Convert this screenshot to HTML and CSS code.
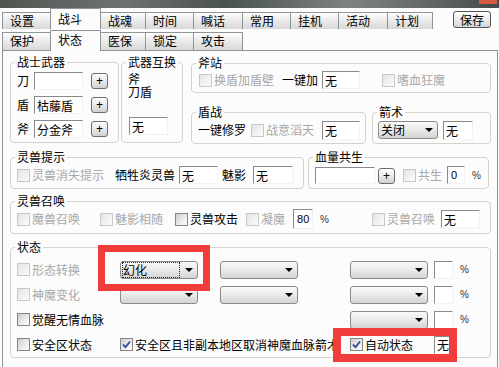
FILE: index.html
```html
<!DOCTYPE html>
<html>
  <head>
    <meta charset="UTF-8">
    <title>战斗 - 状态</title>
    <link rel="stylesheet" href="styles.css">
  </head>
  <body>
    <div class="titlebar"><span class="close"></span></div>

    <div class="tabs tabs-main">
      <span class="tab">设置</span>
      <span class="tab active">战斗</span>
      <span class="tab">战魂</span>
      <span class="tab">时间</span>
      <span class="tab">喊话</span>
      <span class="tab">常用</span>
      <span class="tab">挂机</span>
      <span class="tab">活动</span>
      <span class="tab">计划</span>
      <button class="save">保存</button>
    </div>
    <div class="tabs tabs-sub">
      <span class="tab">保护</span>
      <span class="tab active">状态</span>
      <span class="tab">医保</span>
      <span class="tab">锁定</span>
      <span class="tab">攻击</span>
    </div>

    <div class="panel">
      <div class="row">
        <fieldset class="group g-weapon">
          <legend>战士武器</legend>
          <div class="weapon"><span class="weapon-name">刀</span><input class="edit w49" type="text" value=""><button class="plus">+</button></div>
          <div class="weapon"><span class="weapon-name">盾</span><input class="edit w49" type="text" value="枯藤盾"><button class="plus">+</button></div>
          <div class="weapon"><span class="weapon-name">斧</span><input class="edit w49" type="text" value="分金斧"><button class="plus">+</button></div>
        </fieldset>

        <fieldset class="group g-swap">
          <legend>武器互换</legend>
          <div class="swap-names">
            <span>斧</span>
            <span>刀盾</span>
          </div>
          <input class="edit w39 swap-edit" type="text" value="无">
        </fieldset>

        <div class="col-right">
          <fieldset class="group g-axe">
            <legend>斧站</legend>
            <div class="line h20">
              <label class="check off ml1"><span class="box"></span>换盾加盾壁</label>
              <span class="ml8">一键加</span>
              <input class="edit w38 ml4" type="text" value="无">
              <label class="check off ml22"><span class="box"></span>嗜血狂魔</label>
            </div>
          </fieldset>

          <div class="row row-dun">
            <fieldset class="group g-dun">
              <legend>盾战</legend>
              <div class="line h22">
                <span>一键修罗</span>
                <label class="check off ml5"><span class="box"></span>战意滔天</label>
                <input class="edit w38 h19 ml8" type="text" value="无">
              </div>
            </fieldset>
            <fieldset class="group g-bow">
              <legend>箭术</legend>
              <div class="line h22">
                <div class="combo w60 mln1"><span class="value">关闭</span><span class="arrow"></span></div>
                <input class="edit w30 h19 ml5" type="text" value="无">
              </div>
            </fieldset>
          </div>
        </div>
      </div>

      <div class="row row-pet">
        <fieldset class="group g-tip">
          <legend>灵兽提示</legend>
          <div class="line h22">
            <label class="check off"><span class="box"></span>灵兽消失提示</label>
            <span class="ml11">牺牲炎灵兽</span>
            <input class="edit w39 ml4" type="text" value="无">
            <span class="ml4">魅影</span>
            <input class="edit w40 ml7" type="text" value="无">
          </div>
        </fieldset>
        <fieldset class="group g-blood">
          <legend>血量共生</legend>
          <div class="line h22">
            <input class="edit w60 h17" type="text" value="">
            <button class="plus ml3 low">+</button>
            <label class="check off ml8"><span class="box"></span>共生</label>
            <input class="edit num w18 ml5" type="text" value="0">
            <span class="pct ml7">%</span>
          </div>
        </fieldset>
      </div>

      <fieldset class="group g-call">
        <legend>灵兽召唤</legend>
        <div class="line h22">
          <label class="check off"><span class="box"></span>魔兽召唤</label>
          <label class="check off ml20"><span class="box"></span>魅影相随</label>
          <label class="check ml12"><span class="box"></span>灵兽攻击</label>
          <label class="check off ml8"><span class="box"></span>凝魔</label>
          <input class="edit num w20 h20 ml8" type="text" value="80">
          <span class="pct ml7">%</span>
          <label class="check off ml43"><span class="box"></span>灵兽召唤</label>
          <input class="edit w39 ml6" type="text" value="无">
        </div>
      </fieldset>

      <fieldset class="group g-state">
        <legend>状态</legend>
        <div class="state-grid">
          <label class="check off"><span class="box"></span>形态转换</label>
          <div class="combo"><span class="value focus">幻化</span><span class="arrow"></span></div>
          <div class="combo"><span class="value"></span><span class="arrow"></span></div>
          <div class="combo"><span class="value"></span><span class="arrow"></span></div>
          <input class="edit w19" type="text" value="">
          <span class="pct">%</span>

          <label class="check off"><span class="box"></span>神魔变化</label>
          <div class="combo"><span class="value"></span><span class="arrow"></span></div>
          <div class="combo"><span class="value"></span><span class="arrow"></span></div>
          <div class="combo"><span class="value"></span><span class="arrow"></span></div>
          <input class="edit w19" type="text" value="">
          <span class="pct">%</span>

          <label class="check"><span class="box"></span>觉醒无情血脉</label>
          <div class="combo col4"><span class="value"></span><span class="arrow"></span></div>
          <input class="edit w19" type="text" value="">
          <span class="pct">%</span>

          <label class="check"><span class="box"></span>安全区状态</label>
          <label class="check span-2"><span class="box"><svg width="9" height="9" viewBox="0 0 9 9"><path d="M1 4.5 L3.5 7.2 L8 1.5" fill="none" stroke="#33429a" stroke-width="1.8"/></svg></span>安全区且非副本地区取消神魔血脉箭术</label>
          <label class="check"><span class="box"><svg width="9" height="9" viewBox="0 0 9 9"><path d="M1 4.5 L3.5 7.2 L8 1.5" fill="none" stroke="#33429a" stroke-width="1.8"/></svg></span>自动状态</label>
          <input class="edit w21 span-2" type="text" value="无">
        </div>
      </fieldset>
    </div>

    <!-- red marks drawn over the dialog -->
    <div class="mark mark-form"></div>
    <div class="mark mark-auto"></div>
  </body>
</html>
```

FILE: styles.css
```css
body {
  margin: 0;
  width: 499px;
  height: 367px;
  overflow: hidden;
  position: relative;
  background: #fcfcfc;
  color: #000;
  font-family: "Noto Sans CJK SC", sans-serif;
  font-size: 12px;
  line-height: 14px;
}

/* window strip at the top */
.titlebar {
  height: 8px;
  display: flex;
  justify-content: flex-end;
  background: linear-gradient(90deg, #50564f, #6d7370 25%, #4a524e 45%, #7d8480 70%, #5b605e 90%, #46494a);
}
.close {
  width: 18px;
  height: 4px;
  margin-right: 2px;
  background: #d55a40;
}

/* tab strips */
.tabs {
  display: flex;
  align-items: flex-end;
  height: 21px;
  padding-left: 2px;
}
.tab {
  box-sizing: border-box;
  width: 49px;
  height: 17px;
  margin-left: -1px;
  padding-left: 7px;
  border: 1px solid #8f9494;
  border-bottom: none;
  background: linear-gradient(#fdfdfd, #ececec 45%, #d8d8d8);
  line-height: 16px;
  white-space: nowrap;
}
.tab:first-child {
  margin-left: 0;
}
.tab:nth-child(2) { width: 51px; }
.tab:nth-child(3) { width: 46px; }
.tab:nth-child(5) { width: 50px; }
.tab:nth-child(8) { width: 50px; }
.tab:nth-child(9) { width: 46px; }
.tab.active {
  position: relative;
  z-index: 1;
  background: #fcfcfc;
}
.tabs-main .active {
  height: 21px;
  padding-top: 2px;
}
.tabs-sub .tab {
  height: 18px;
}
.tabs-sub .active {
  height: 21px;
  margin-bottom: -1px;
  padding-top: 1px;
}
.save {
  align-self: flex-start;
  box-sizing: border-box;
  width: 38px;
  height: 17px;
  margin: 3px 0 0 20px;
  padding: 0;
  border: 1px solid #555;
  border-radius: 3px;
  background: linear-gradient(#ffffff, #ececec 50%, #d6d6d6);
  font: inherit;
  line-height: 14px;
  color: #000;
}

.panel {
  box-sizing: border-box;
  width: 496px;
  height: 330px;
  margin-left: 2px;
  padding: 4px 0 0 7px;
  border: 1px solid #8f9494;
  background: #fcfcfc;
}

/* group boxes */
.group {
  box-sizing: border-box;
  min-width: 0;
  margin: 0;
  padding: 0 0 0 6px;
  border: 1px solid #d3d3cc;
  border-radius: 4px;
}
.group legend {
  margin-left: -2px;
  padding: 0 2px;
  line-height: 14px;
}
.row {
  display: flex;
  align-items: flex-start;
}
.g-weapon { width: 109px; height: 88px; }
.g-swap { width: 62px; height: 88px; margin-left: 2px; }
.col-right { width: 300px; margin-left: 8px; }
.g-axe { width: 300px; height: 37px; margin-top: 1px; }
.row-dun { margin-top: 12px; }
.g-dun { width: 175px; height: 39px; }
.g-bow { width: 119px; height: 39px; margin-left: 6px; }
.row-pet { margin-top: 6px; }
.g-tip { width: 294px; height: 39px; }
.g-blood { width: 181px; height: 39px; margin-left: 4px; }
.g-call { width: 481px; height: 40px; margin-top: 5px; }
.g-state { width: 481px; height: 118px; margin-top: 6px; }

.weapon {
  display: flex;
  align-items: center;
  height: 24px;
}
.weapon-name {
  width: 17px;
}
.weapon .plus {
  margin-left: 8px;
}
.swap-names {
  margin-top: 3px;
  line-height: 13px;
}
.swap-names span {
  display: block;
}
.g-swap .swap-edit {
  display: block;
  margin: 19px 0 0 1px;
}

.line {
  display: flex;
  align-items: center;
  white-space: nowrap;
}
.h20 { height: 20px; }
.h22 { height: 22px; }

/* controls */
.edit {
  box-sizing: border-box;
  height: 18px;
  margin: 0;
  padding: 0 0 0 2px;
  border: 0;
  border-top: 1px solid #8a8a8a;
  border-left: 1px solid #8a8a8a;
  border-right: 1px solid #f2f2f2;
  border-bottom: 1px solid #f2f2f2;
  background: #fff;
  font: inherit;
  color: #000;
  outline: none;
}
.edit.num {
  padding-left: 3px;
  font: 11px "Liberation Sans", sans-serif;
}
.edit.h17 { height: 17px; }
.edit.h19 { height: 19px; }
.edit.h20 { height: 20px; }
.w18 { width: 18px; }
.w19 { width: 19px; }
.w20 { width: 20px; }
.w21 { width: 21px; }
.w30 { width: 30px; }
.w38 { width: 38px; }
.w39 { width: 39px; }
.w40 { width: 40px; }
.w49 { width: 49px; }
.w60 { width: 60px; }

.plus {
  box-sizing: border-box;
  width: 17px;
  height: 16px;
  padding: 0;
  border: 1px solid #6b6b6b;
  border-radius: 3px;
  background: linear-gradient(#fefefe, #e9e9e9 50%, #d0d0d0);
  font: 12px/12px "Liberation Sans", sans-serif;
  color: #000;
}
.plus.low {
  align-self: flex-end;
  margin-bottom: 2px;
}

.check {
  display: inline-flex;
  align-items: center;
  gap: 2px;
  white-space: nowrap;
}
.check.off {
  color: #a8a8a8;
}
.box {
  box-sizing: border-box;
  display: flex;
  align-items: center;
  justify-content: center;
  width: 13px;
  height: 13px;
  border: 1px solid #858585;
  background: linear-gradient(135deg, #cdcdcd, #f7f7f7 80%);
}
.off .box {
  border-color: #c8c8c8;
  background: linear-gradient(135deg, #e4e4e4, #fbfbfb);
}

.combo {
  box-sizing: border-box;
  display: flex;
  align-items: center;
  width: 78px;
  height: 18px;
  padding: 0 4px 0 2px;
  border: 1px solid #8b8b8b;
  border-radius: 3px;
  background: linear-gradient(#fafafa, #ebebeb 45%, #d4d4d4);
}
.combo .value {
  flex: 1;
  height: 14px;
  line-height: 14px;
}
.combo .value.focus {
  flex: none;
  width: 56px;
  margin-right: 6px;
  outline: 1px dotted #222;
}
.combo .arrow {
  margin-left: auto;
  width: 0;
  height: 0;
  border-left: 4px solid transparent;
  border-right: 4px solid transparent;
  border-top: 4px solid #000;
}
.combo.w60 { width: 60px; }

.pct {
  margin-left: -2px;
  font: 10px "Liberation Sans", sans-serif;
  color: #333;
}
.line .pct { margin-left: 7px; }

/* state grid */
.state-grid {
  display: grid;
  grid-template-columns: 103px 100px 130px 84px 28px auto;
  grid-auto-rows: 25px;
  align-items: center;
  padding-top: 3px;
}
.col4 { grid-column: 4; }
.span-2 { grid-column: span 2; }

/* spacing helpers */
.ml1 { margin-left: 1px; }
.mln1 { margin-left: -1px; }
.ml3 { margin-left: 3px; }
.ml4 { margin-left: 4px; }
.ml5 { margin-left: 5px; }
.ml6 { margin-left: 6px; }
.ml7 { margin-left: 7px; }
.ml8 { margin-left: 8px; }
.ml11 { margin-left: 11px; }
.ml12 { margin-left: 12px; }
.ml20 { margin-left: 20px; }
.ml22 { margin-left: 22px; }
.ml43 { margin-left: 43px; }

/* red annotation frames */
.mark {
  position: absolute;
  box-sizing: border-box;
  border: 7px solid #f23c3c;
}
.mark-form {
  left: 98px;
  top: 245px;
  width: 112px;
  height: 46px;
}
.mark-auto {
  left: 333px;
  top: 328px;
  width: 124px;
  height: 34px;
  border-width: 8px;
}
```
